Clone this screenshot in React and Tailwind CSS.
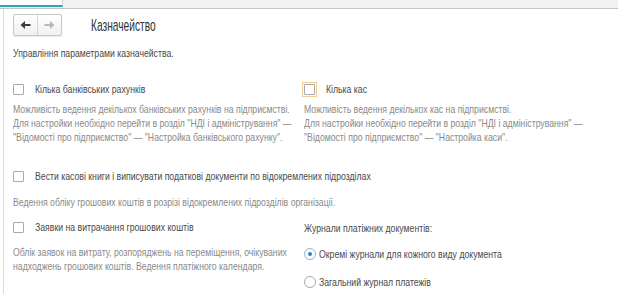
import React from 'react';

const font = { fontFamily: '"Liberation Sans", Arial, sans-serif' };

// the reference renders Arial noticeably condensed, so text is squeezed horizontally
const T = ({ children, className = '' }) => (
  <span className={`inline-block origin-left scale-x-[0.79] whitespace-nowrap ${className}`}>{children}</span>
);

const Check = ({ focused }) => (
  <span
    className={`inline-flex items-center justify-center w-[15px] h-[15px] shrink-0 ${
      focused ? 'border border-[#f3cf98] bg-[#fffaf2]' : ''
    }`}
  >
    <span className="block w-[11px] h-[11px] border border-[#a9a9a9] bg-white rounded-[1px]" />
  </span>
);

const Radio = ({ on }) => (
  <span
    className={`inline-flex items-center justify-center w-[12px] h-[12px] rounded-full border shrink-0 bg-white ${
      on ? 'border-[#8fb4d8]' : 'border-[#a9a9a9]'
    }`}
  >
    {on && <span className="block w-[4px] h-[4px] rounded-full bg-[#2f7fc8]" />}
  </span>
);

const Option = ({ label, focused }) => (
  <div className="flex items-center h-[15px] -ml-[2px]">
    <Check focused={focused} />
    <T className="ml-[9px] text-[11px] text-[#4a4a4a] leading-none">{label}</T>
  </div>
);

const Note = ({ children, className = '' }) => (
  <p className={`origin-left scale-x-[0.79] whitespace-nowrap text-[11px] leading-[14px] text-[#8a8a8a] ${className}`}>
    {children}
  </p>
);

const Arrow = ({ color, flip }) => (
  <svg width="11" height="10" viewBox="0 0 11 10" className={flip ? '-scale-x-100' : ''}>
    <path d="M0.5 5 L5 1 V4 H10.5 V6 H5 V9 Z" fill={color} />
  </svg>
);

export default function App() {
  return (
    <div className="w-[618px] h-[294px] bg-white overflow-hidden" style={font}>
      {/* Tabs strip */}
      <div className="flex h-[9px] bg-[#f2f2f2] border-b border-[#c4c4c4]">
        <div className="w-[63px] h-[7px] bg-white border-b-2 border-[#2aa6b8] border-r border-r-[#cfcfcf]" />
      </div>

      <div className="ml-[3px] border-l border-[#dcdcdc] h-full pl-[9px] pt-[5px]">
        {/* Header */}
        <div className="flex items-center h-[22px]">
          <div className="flex w-[49px] h-[22px] border border-[#c8c8c8] rounded-[2px] bg-gradient-to-b from-white to-[#f0f0f0] shadow-[0_1px_1px_rgba(0,0,0,0.08)]">
            <span className="flex-1 flex items-center justify-center border-r border-[#d6d6d6]">
              <Arrow color="#3c3c3c" />
            </span>
            <span className="flex-1 flex items-center justify-center">
              <Arrow color="#b8b8b8" flip />
            </span>
          </div>
          <h1 className="ml-[29px] text-[17px] text-[#333] leading-none">
            <span className="inline-block origin-left scale-x-[0.6] whitespace-nowrap">Казначейство</span>
          </h1>
        </div>

        <p className="mt-[10px] text-[11px] text-[#4a4a4a] leading-[14px]">
          <T>Управління параметрами казначейства.</T>
        </p>

        {/* Row 1 */}
        <div className="mt-[22px] grid grid-cols-[291px_1fr]">
          <div>
            <Option label="Кілька банківських рахунків" />
            <Note className="mt-[5px]">
              Можливість ведення декількох банківських рахунків на підприємстві.
              <br />Для настройки необхідно перейти в розділ "НДІ і адміністрування" —
              <br />"Відомості про підприємство" — "Настройка банківського рахунку".
            </Note>
          </div>
          <div>
            <Option label="Кілька кас" focused />
            <Note className="mt-[5px]">
              Можливість ведення декількох кас на підприємстві.
              <br />Для настройки необхідно перейти в розділ "НДІ і адміністрування" —
              <br />"Відомості про підприємство" — "Настройка каси".
            </Note>
          </div>
        </div>

        {/* Row 2 */}
        <div className="mt-[25px]">
          <Option label="Вести касові книги і виписувати податкові документи по відокремлених підрозділах" />
          <Note className="mt-[11px]">Ведення обліку грошових коштів в розрізі відокремлених підрозділів організації.</Note>
        </div>

        {/* Row 3 */}
        <div className="mt-[11px] grid grid-cols-[291px_1fr]">
          <div>
            <Option label="Заявки на витрачання грошових коштів" />
            <Note className="mt-[10px]">
              Облік заявок на витрату, розпоряджень на переміщення, очікуваних
              <br />надходжень грошових коштів. Ведення платіжного календаря.
            </Note>
          </div>
          <div>
            <div className="mt-[1px] h-[15px] flex items-center text-[11px] text-[#4a4a4a]">
              <T>Журнали платіжних документів:</T>
            </div>
            <div className="mt-[11px] flex items-center gap-[3px] h-[14px]">
              <Radio on />
              <T className="text-[11px] text-[#4a4a4a]">Окремі журнали для кожного виду документа</T>
            </div>
            <div className="mt-[14px] flex items-center gap-[3px] h-[14px]">
              <Radio />
              <T className="text-[11px] text-[#4a4a4a]">Загальний журнал платежів</T>
            </div>
          </div>
        </div>
      </div>
    </div>
  );
}
